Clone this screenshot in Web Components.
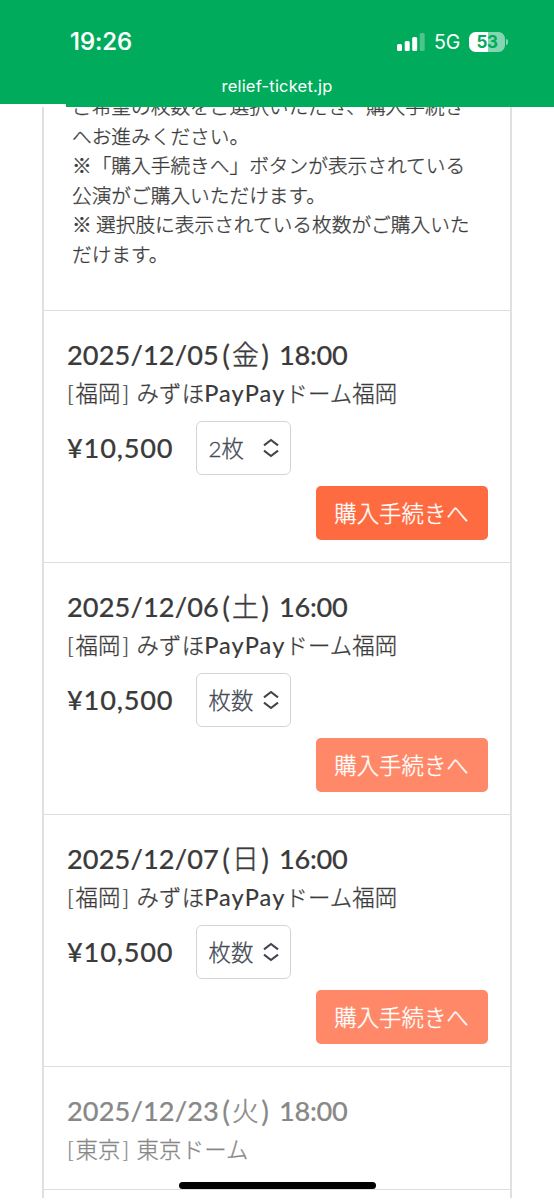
<!DOCTYPE html>
<html lang="ja">
<head>
<meta charset="utf-8">
<title>relief-ticket.jp</title>
<style>
html,body{margin:0;padding:0;background:#fff}
body{width:554px;height:1200px;overflow:hidden}
</style>
</head>
<body>
<ticket-page></ticket-page>
<script>
const define = (name, html, setup) => {
  const t = document.createElement('template');
  t.innerHTML = html;
  customElements.define(name, class extends HTMLElement {
    connectedCallback() {
      if (this.shadowRoot) return;
      this.attachShadow({mode: 'open'}).append(t.content.cloneNode(true));
      if (setup) setup(this, this.shadowRoot);
    }
  });
};

define('status-bar', `
<style>
:host{display:flex;flex-direction:column;height:104px;background:#00ab5c;color:#fff;font-family:Inter,sans-serif}
.row{display:flex;align-items:center;height:60px;margin-top:11.5px;padding:0 46px 0 70px}
.time{font-size:24px;font-weight:500;letter-spacing:-.05px;line-height:30px;padding-top:1px;-webkit-text-stroke:.2px #fff}
.sig{margin-left:auto;display:block}
.net{font-size:19.5px;line-height:30px;margin:1px 9px 0 9px;letter-spacing:-.2px}
.bat{display:flex;align-items:center;justify-content:center;width:36px;height:20px;border-radius:6.5px;background:linear-gradient(90deg,#fff 53%,#85d6b0 53%);color:#00ab5c;font-size:17px;font-weight:700;line-height:20px;letter-spacing:-.3px}
.cap{width:2px;height:6px;border-radius:0 2px 2px 0;background:#85d6b0;margin-left:1px}
.url{text-align:center;font-size:16.5px;line-height:20px;margin-top:4.5px;letter-spacing:.2px}
</style>
<div class="row"><span class="time">19:26</span>
<svg class="sig" width="28" height="18" viewBox="0 0 28 18" fill="#fff"><rect y="11" width="5" height="7" rx="1.5"/><rect x="7.7" y="8" width="5" height="10" rx="1.5"/><rect x="15.2" y="4" width="5" height="14" rx="1.5"/><rect x="22.7" y="0" width="5" height="18" rx="1.5" opacity=".3"/></svg>
<span class="net">5G</span><span class="bat">53</span><span class="cap"></span></div>
<div class="url">relief-ticket.jp</div>`);

define('ticket-notice', `
<style>
:host{display:block;height:204px;border-bottom:1.5px solid #dedede;box-sizing:border-box;font:300 19.7px/29.5px "Noto Sans CJK JP",sans-serif;color:#3b3b3b;-webkit-text-stroke:.3px currentColor;overflow:hidden}
p{margin:-16px 0 0 28px;white-space:nowrap}
</style><p><slot></slot></p>`);

define('quantity-select', `
<style>
:host{display:flex;box-sizing:border-box;width:95px;height:54px;border:1.5px solid #d2d4da;border-radius:6px;align-items:center;padding:2px 10px 0 11.5px;justify-content:space-between;background:#fff;color:#454b56;font:300 22.4px/30px Lato,"Noto Sans CJK JP",sans-serif;-webkit-text-stroke:.3px currentColor}
svg{margin-top:-3px}
</style><span><slot></slot></span>
<svg width="18" height="20" viewBox="0 0 18 20" fill="none" stroke="#41444b" stroke-width="2.1"><path d="M2 7.3 9 2l7 5.3M2 12.7l7 5.3 7-5.3"/></svg>`);

define('purchase-button', `
<style>
:host{display:flex;align-items:center;justify-content:center;width:172px;height:54px;border-radius:5px;background:#ff6b41;color:#fff;font:300 22.4px/30px "Noto Sans CJK JP",sans-serif;-webkit-text-stroke:.3px currentColor}
:host([muted]){background:#ff8868}
span{margin:-3px 1px 0 0}
</style><span><slot></slot></span>`);

define('ticket-card', `
<style>
:host{display:block;box-sizing:border-box;height:252px;border-bottom:1.5px solid #dedede;color:#3b3b3b;padding:26px 22px 0 23px;font-family:Lato,"Noto Sans CJK JP",sans-serif;white-space:nowrap}
:host([closed]){height:123px;color:#888}
.date{display:flex;font-size:27.2px;line-height:36px;font-weight:500;-webkit-text-stroke:.15px currentColor}
.d{width:153px;letter-spacing:.1px}
.p{width:12px;text-align:center;font-size:29px;font-weight:400}
.k{width:27px;font:300 26.8px/34px "Noto Sans CJK JP",sans-serif;-webkit-text-stroke:.4px currentColor}
.t{margin-left:8px;letter-spacing:-.3px}
.venue{font-size:22.4px;line-height:32px;margin-top:5px;font-weight:300;letter-spacing:.12px;-webkit-text-stroke:.3px currentColor}
.buy{display:flex;align-items:center;margin-top:11px}
.price{width:129px;font-size:27.2px;font-weight:500;line-height:36px;letter-spacing:.8px;-webkit-text-stroke:.15px currentColor}
purchase-button{margin:11px 0 0 auto}
</style>
<div class="date"><span class="d"></span><span class="p">(</span><span class="k"></span><span class="p">)</span><span class="t"></span></div>
<div class="venue"><slot></slot></div>
<div class="buy"><span class="price">¥10,500</span><quantity-select></quantity-select></div>
<purchase-button>購入手続きへ</purchase-button>`, (h, r) => {
  r.querySelector('.d').textContent = h.getAttribute('date');
  r.querySelector('.k').textContent = h.getAttribute('day');
  r.querySelector('.t').textContent = h.getAttribute('time');
  if (h.hasAttribute('closed')) {
    r.querySelector('.buy').remove();
    r.querySelector('purchase-button').remove();
  } else {
    r.querySelector('quantity-select').textContent = h.getAttribute('qty');
    if (h.hasAttribute('muted')) r.querySelector('purchase-button').setAttribute('muted', '');
  }
});

define('ticket-page', `
<style>
:host{display:block;position:relative;height:1200px;overflow:hidden;background:#fff}
.edge{height:3.4px;margin-left:66px;background:#00ab5c}
.list{box-sizing:border-box;width:470px;height:1090.6px;margin-left:42px;border:solid #e0e0e0;border-width:0 2px;overflow:hidden}
.home{position:absolute;left:179px;top:1181.5px;width:197px;height:7px;border-radius:4px;background:#000}
b{font-weight:500;font-size:23.5px;letter-spacing:1.1px;line-height:1;-webkit-text-stroke:0}
i{font-style:normal;display:inline-block;width:8.6px}
i.r{text-align:right;margin-right:1.2px}
</style>
<status-bar></status-bar>
<div class="edge"></div>
<div class="list">
<ticket-notice>ご希望の枚数をご選択いただき、購入手続き<br>へお進みください。<br>※「購入手続きへ」ボタンが表示されている<br>公演がご購入いただけます。<br>※ 選択肢に表示されている枚数がご購入いた<br>だけます。</ticket-notice>
<ticket-card date="2025/12/05" day="金" time="18:00" qty="2枚"><i>[</i>福岡<i class="r">]</i> みずほ<b>PayPay</b>ドーム福岡</ticket-card>
<ticket-card date="2025/12/06" day="土" time="16:00" qty="枚数" muted><i>[</i>福岡<i class="r">]</i> みずほ<b>PayPay</b>ドーム福岡</ticket-card>
<ticket-card date="2025/12/07" day="日" time="16:00" qty="枚数" muted><i>[</i>福岡<i class="r">]</i> みずほ<b>PayPay</b>ドーム福岡</ticket-card>
<ticket-card date="2025/12/23" day="火" time="18:00" closed><i>[</i>東京<i class="r">]</i> 東京ドーム</ticket-card>
</div>
<div class="home"></div>`);
</script>
</body>
</html>
